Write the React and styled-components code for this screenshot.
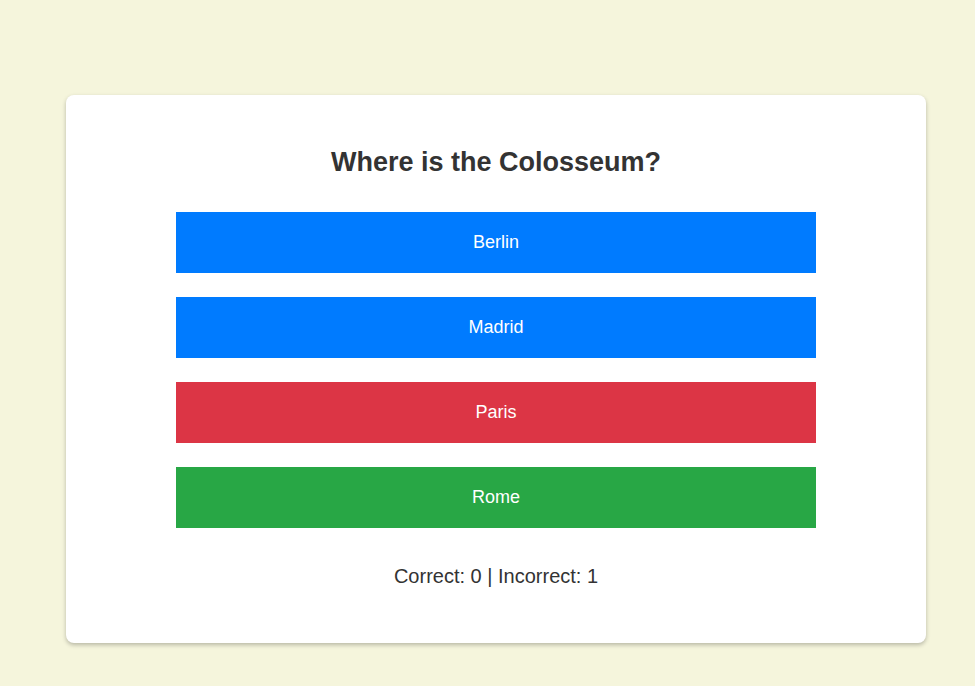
import React from 'react';
import styled, { createGlobalStyle } from 'styled-components';

const GlobalStyle = createGlobalStyle`
  html, body {
    margin: 0;
    padding: 0;
    background: #f5f5dc;
    font-family: "Liberation Sans", Arial, sans-serif;
  }
`

const Page = styled.div`
  padding: 95px 0 44px 66px;
`

const Card = styled.div`
  width: 860px;
  box-sizing: border-box;
  background: #fff;
  border-radius: 8px;
  box-shadow: 0 2px 4px rgba(0, 0, 0, 0.25);
  padding: 52px 110px 55px;
  display: flex;
  flex-direction: column;
  align-items: center;
`

const Question = styled.h2`
  margin: 0 0 34px;
  font-size: 27px;
  line-height: 31px;
  font-weight: bold;
  color: #333;
`

const Options = styled.div`
  width: 100%;
  display: flex;
  flex-direction: column;
  gap: 24px;
`

const colors = {
  idle: '#007bff',
  wrong: '#dc3545',
  right: '#28a745',
}

const Option = styled.button`
  width: 100%;
  height: 61px;
  border: none;
  border-radius: 0;
  background: ${p => colors[p.state]};
  color: #fff;
  font-family: "Liberation Sans", Arial, sans-serif;
  font-size: 18px;
  cursor: pointer;
`

const Score = styled.p`
  margin: 37px 0 0;
  font-size: 20px;
  line-height: 23px;
  color: #333;
`

const answers = [
  { text: 'Berlin', state: 'idle' },
  { text: 'Madrid', state: 'idle' },
  { text: 'Paris', state: 'wrong' },
  { text: 'Rome', state: 'right' },
]

export default function App() {
  return (
    <Page>
      <GlobalStyle />
      <Card>
        <Question>Where is the Colosseum?</Question>
        <Options>
          {answers.map(a => (
            <Option key={a.text} state={a.state}>{a.text}</Option>
          ))}
        </Options>
        <Score>Correct: 0 | Incorrect: 1</Score>
      </Card>
    </Page>
  )
}
